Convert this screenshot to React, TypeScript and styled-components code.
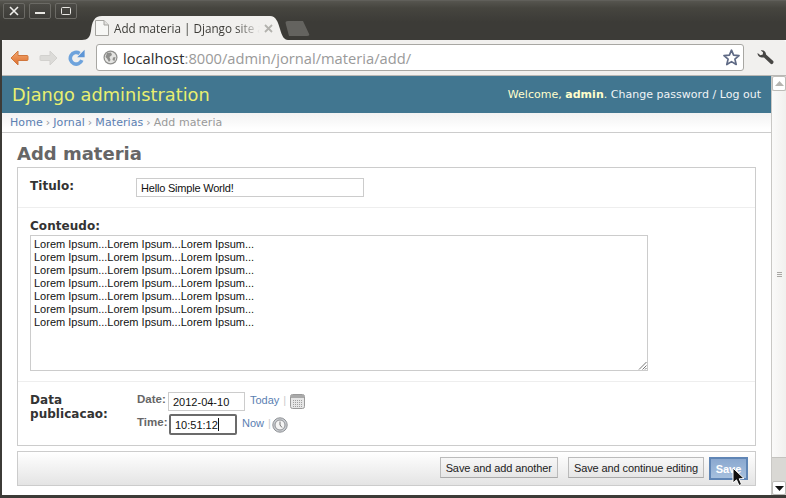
import React from 'react'
import styled, { createGlobalStyle } from 'styled-components'

const GlobalStyle = createGlobalStyle`
  html, body {
    margin: 0;
    padding: 0;
    overflow: hidden;
    background: #3c3b37;
  }
  * {
    box-sizing: border-box;
  }
`

const BrowserWindow = styled.div`
  width: 786px;
  height: 498px;
  display: flex;
  flex-direction: column;
  background: #3c3b37;
  padding-bottom: 3px;
  font-family: 'DejaVu Sans', sans-serif;
`

const TitleStrip = styled.div`
  height: 40px;
  flex: none;
  display: flex;
  padding-left: 3px;
  background: linear-gradient(#6a6965 0, #56554f 1px, #46453f 8px, #3c3b37 22px);
`

const WindowControls = styled.div`
  display: flex;
  gap: 4px;
  padding-top: 3px;
  width: 79px;
  flex: none;
`

const WindowButton = styled.div`
  width: 22px;
  height: 16px;
  border: 1px solid #6b6a65;
  border-radius: 2px;
  background: linear-gradient(#4b4a45, #3d3c38);
  display: flex;
  align-items: center;
  justify-content: center;
`

const Tab = styled.div`
  width: 206px;
  height: 24px;
  margin-top: 16px;
  flex: none;
  display: flex;
  align-items: center;
  padding: 0 0 0 13px;
  background: #f1f0ee;
  clip-path: path('M0 24 C6 24 8 21 9 15 C10 6 12 0 20 0 L188 0 C194 0 196 6 198 13 C200 20 202 24 206 24 Z');
`

const TabTitle = styled.span`
  width: 146px;
  margin-left: 5px;
  font-family: 'Open Sans', sans-serif;
  font-size: 11.7px;
  color: #3c3b37;
  white-space: nowrap;
  mask-image: linear-gradient(90deg, #000 122px, transparent 146px);
`

const TabClose = styled.svg`
  margin-left: 4px;
  flex: none;
`

const NewTab = styled.div`
  width: 25px;
  height: 15px;
  margin: 21px 0 0 -3px;
  flex: none;
  background: #64635f;
  clip-path: polygon(0 0, 72% 0, 100% 100%, 16% 100%);
  border-radius: 3px;
`

const Body = styled.div`
  flex: 1;
  min-height: 0;
  margin-left: 2px;
  display: flex;
  flex-direction: column;
  background: #fff;
`

const Toolbar = styled.div`
  height: 36px;
  flex: none;
  display: flex;
  align-items: center;
  padding: 0 12px 0 8px;
  background: #f1f0ee;
  border-bottom: 1px solid #b9b8b5;
  border-radius: 3px 3px 0 0;
`

const NavIcon = styled.svg`
  flex: none;
  margin-right: 10px;
`

const Omnibox = styled.div`
  flex: 1;
  height: 27px;
  margin: 0 13px 0 1px;
  display: flex;
  align-items: center;
  padding: 0 3px 0 6px;
  background: #fff;
  border: 1px solid #a8a7a3;
  border-radius: 3px;
`

const UrlText = styled.div`
  flex: 1;
  margin-left: 5px;
  font-family: 'Open Sans', sans-serif;
  font-size: 14.7px;
  color: #9a9a9a;
  white-space: nowrap;
`

const UrlHost = styled.span`
  color: #2e2e2e;
`

const Viewport = styled.div`
  flex: 1;
  min-height: 0;
  display: flex;
`

const Page = styled.div`
  flex: 1;
  min-width: 0;
  display: flex;
  flex-direction: column;
  background: #fff;
`

const Header = styled.div`
  height: 37px;
  flex: none;
  display: flex;
  align-items: center;
  justify-content: space-between;
  padding: 0 10px 0 10px;
  background: #417690;
`

const Branding = styled.div`
  font-size: 17.8px;
  color: #e9ef6f;
`

const UserTools = styled.div`
  font-size: 11px;
  letter-spacing: 0.02px;
  color: #ffc;
`

const UserLink = styled.span`
  color: #f0f4f6;
`

const Breadcrumbs = styled.div`
  height: 20px;
  flex: none;
  display: flex;
  align-items: center;
  padding-left: 8px;
  font-size: 11px;
  letter-spacing: 0.08px;
  color: #999;
  background: linear-gradient(#f2f2f2, #fff 16px);
  border-bottom: 1px solid #ccc;
`

const CrumbLink = styled.span`
  color: #5b80b2;
`

const CrumbSep = styled.span`
  margin: 0 3px;
`

const Content = styled.div`
  padding: 10px 15px 0;
`

const PageTitle = styled.h1`
  margin: 0 0 2px;
  font-size: 18px;
  line-height: 22px;
  font-weight: bold;
  color: #666;
`

const Module = styled.div`
  border: 1px solid #ccc;
  margin-bottom: 5px;
`

const FormRow = styled.div<{ $stacked?: boolean }>`
  display: flex;
  flex-direction: ${({ $stacked }) => ($stacked ? 'column' : 'row')};
  padding: ${({ $stacked }) => ($stacked ? '11px 12px 10px' : '10px 12px 10px')};
  border-bottom: 1px solid #eee;

  &:last-child {
    border-bottom: none;
  }
`

const FieldLabel = styled.div<{ $stacked?: boolean }>`
  width: ${({ $stacked }) => ($stacked ? 'auto' : '106px')};
  flex: none;
  margin-bottom: ${({ $stacked }) => ($stacked ? 1 : 0)}px;
  padding-top: ${({ $stacked }) => ($stacked ? 0 : 1)}px;
  font-size: 12px;
  line-height: ${({ $stacked }) => ($stacked ? 15 : 14)}px;
  font-weight: bold;
  letter-spacing: 0.05px;
  color: #333;
`

const TextBox = styled.div<{ $width: number; $focused?: boolean }>`
  width: ${({ $width }) => $width}px;
  height: ${({ $focused }) => ($focused ? 21 : 19)}px;
  display: flex;
  align-items: center;
  padding: 0 4px;
  font-family: 'Liberation Sans', sans-serif;
  font-size: 11px;
  color: #111;
  background: #fff;
  border: ${({ $focused }) => ($focused ? '2px solid #6b6b6b' : '1px solid #ccc')};
  border-radius: ${({ $focused }) => ($focused ? 2 : 0)}px;
`

const TitleBox = styled(TextBox)`
  letter-spacing: -0.2px;
`

const Caret = styled.span`
  width: 1px;
  height: 13px;
  background: #111;
`

const TextArea = styled.div`
  position: relative;
  width: 618px;
  height: 136px;
  padding: 2px 3px;
  border: 1px solid #ccc;
  font-family: 'Liberation Sans', sans-serif;
  font-size: 11px;
  line-height: 13px;
  color: #111;
`

const ResizeGrip = styled.svg`
  position: absolute;
  right: 0;
  bottom: 0;
`

const SplitRows = styled.div`
  display: flex;
  flex-direction: column;
  gap: 3px;
`

const SplitRow = styled.div`
  display: flex;
  align-items: center;
`

const SplitLabel = styled.div<{ $width: number }>`
  width: ${({ $width }) => $width}px;
  flex: none;
  margin-top: -4px;
  padding-left: 1px;
  font-family: 'Liberation Sans', sans-serif;
  font-size: 11.5px;
  font-weight: bold;
  line-height: 15px;
  color: #666;
`

const Shortcuts = styled.div`
  display: flex;
  align-items: center;
  height: 19px;
  margin-left: 5px;
  font-family: 'Liberation Sans', sans-serif;
  font-size: 11px;
  color: #5b80b2;
`

const ShortcutLink = styled.span`
  margin-top: -4px;
`

const ShortcutSep = styled.span`
  margin: -4px 4px 0;
  color: #ccc;
`

const ClockIcon = styled.svg`
  margin-left: -3px;
`

const SubmitRow = styled.div`
  height: 35px;
  display: flex;
  align-items: center;
  justify-content: flex-end;
  gap: 10px;
  padding: 0 7px 0 0;
  border: 1px solid #ccc;
  background: linear-gradient(#fff, #e4e4e4);
`

const ActionButton = styled.div`
  height: 21px;
  margin-bottom: 2px;
  display: flex;
  align-items: center;
  padding: 0 5px;
  font-family: 'Liberation Sans', sans-serif;
  font-size: 11px;
  letter-spacing: -0.1px;
  color: #222;
  background: linear-gradient(#f7f7f7, #e6e6e6);
  border: 1px solid #bbb;
  border-bottom-color: #aaa;
`

const DefaultButton = styled.div`
  position: relative;
  width: 39px;
  height: 23px;
  margin-left: -5px;
  display: flex;
  align-items: center;
  justify-content: center;
  font-family: 'Liberation Sans', sans-serif;
  font-size: 11px;
  font-weight: bold;
  color: #fff;
  background: linear-gradient(#8aa8cf, #a6c0de);
  border: 2px solid #5f85b5;
`

const Pointer = styled.svg`
  position: absolute;
  left: 21px;
  top: 8px;
`

const Scrollbar = styled.div`
  width: 15px;
  flex: none;
  display: flex;
  flex-direction: column;
  background: #d9d8d4;
  border-left: 1px solid #c9c8c5;
`

const ScrollButton = styled.div<{ $height: number }>`
  height: ${({ $height }) => $height}px;
  flex: none;
  display: flex;
  align-items: center;
  justify-content: center;
  background: #fff;
  border: 1px solid #bdbcb8;
  border-radius: 2px;
`

const ScrollThumb = styled.div`
  height: 367px;
  flex: none;
  display: flex;
  flex-direction: column;
  align-items: center;
  justify-content: center;
  gap: 1px;
  background: linear-gradient(90deg, #fafaf9, #f1f0ee);
  border-bottom: 1px solid #c4c3bf;
`

const ScrollTrack = styled.div`
  flex: 1;
`

const GripLine = styled.span`
  width: 5px;
  height: 1px;
  background: #a9a8a4;
`

const loremLines = Array.from({ length: 7 }, () => 'Lorem Ipsum...Lorem Ipsum...Lorem Ipsum...')

const App = () => {
  return (
    <BrowserWindow>
      <GlobalStyle />
      <TitleStrip>
        <WindowControls>
          <WindowButton>
            <svg width="10" height="10" viewBox="0 0 10 10">
              <path d="M1 1 L9 9 M9 1 L1 9" stroke="#f0efec" strokeWidth="1.6" />
            </svg>
          </WindowButton>
          <WindowButton>
            <svg width="10" height="10" viewBox="0 0 10 10">
              <rect x="0" y="6" width="10" height="2" fill="#e8e7e3" />
            </svg>
          </WindowButton>
          <WindowButton>
            <svg width="10" height="8" viewBox="0 0 10 8">
              <rect x="0.5" y="0.5" width="9" height="7" rx="1" fill="none" stroke="#e8e7e3" />
            </svg>
          </WindowButton>
        </WindowControls>
        <Tab>
          <svg width="14" height="16" viewBox="0 0 14 16">
            <path d="M0.5 0.5 H9 L13.5 5 V15.5 H0.5 Z" fill="#f7f7f5" stroke="#a5a4a0" />
            <path d="M9 0.5 V5 H13.5" fill="#e2e1de" stroke="#a5a4a0" />
          </svg>
          <TabTitle>Add materia | Django site a</TabTitle>
          <TabClose width="9" height="9" viewBox="0 0 9 9">
            <path d="M1 1 L8 8 M8 1 L1 8" stroke="#b3b2ae" strokeWidth="1.8" />
          </TabClose>
        </Tab>
        <NewTab />
      </TitleStrip>
      <Body>
        <Toolbar>
          <NavIcon width="19" height="16" viewBox="0 0 19 16">
            <defs>
              <linearGradient id="backFill" x1="0" y1="0" x2="0" y2="1">
                <stop offset="0" stopColor="#f3ab74" />
                <stop offset="1" stopColor="#dd6c2a" />
              </linearGradient>
            </defs>
            <path d="M8 1 L1 8 L8 15 V10.5 H17 Q18 10.5 18 9.5 V6.5 Q18 5.5 17 5.5 H8 Z" fill="url(#backFill)" stroke="#d0763c" strokeWidth="1" strokeLinejoin="round" />
          </NavIcon>
          <NavIcon width="19" height="16" viewBox="0 0 19 16">
            <path d="M11 1 L18 8 L11 15 V10.5 H2 Q1 10.5 1 9.5 V6.5 Q1 5.5 2 5.5 H11 Z" fill="#dcdbd8" stroke="#d2d1ce" strokeWidth="1" strokeLinejoin="round" />
          </NavIcon>
          <NavIcon width="17" height="17" viewBox="0 0 17 17">
            <path d="M13.8 11.2 A5.9 5.9 0 1 1 11.6 4.4" fill="none" stroke="#6ea3dc" strokeWidth="3.6" />
            <path d="M16.6 0.8 V8.2 H9.2 Z" fill="#5d95d6" />
          </NavIcon>
          <Omnibox>
            <svg width="15" height="15" viewBox="0 0 15 15">
              <circle cx="7.5" cy="7.5" r="7" fill="#8e8e8c" />
              <circle cx="7.5" cy="7.5" r="5.8" fill="#e4e4e2" />
              <path d="M4 3 L8 2.5 L9 5 L6.5 7 L7.5 10 L6 12 L4 8.5 L2.5 7 Z M10 7.5 L12.5 7 L11.5 11 L9.5 10 Z" fill="#8e8e8c" />
            </svg>
            <UrlText>
              <UrlHost>localhost</UrlHost>:8000/admin/jornal/materia/add/
            </UrlText>
            <svg width="17" height="17" viewBox="0 0 17 17">
              <path d="M8.5 1.2 L10.6 6.2 L16 6.6 L11.9 10.1 L13.2 15.5 L8.5 12.6 L3.8 15.5 L5.1 10.1 L1 6.6 L6.4 6.2 Z" fill="#fff" stroke="#5f6a85" strokeWidth="1.7" strokeLinejoin="round" />
            </svg>
          </Omnibox>
          <svg width="17" height="16" viewBox="0 0 17 16">
            <path d="M0.6 3 L3.4 5.2 L5.8 4.6 L6 2.2 L3.8 0.4 C6.5 -0.4 9.2 1.6 9 4.6 L16.2 11 C17.4 12.4 15.2 15.2 13.6 13.8 L7 7.4 C3.6 8 0.2 6 0.6 3 Z" fill="#474644" />
          </svg>
        </Toolbar>
        <Viewport>
          <Page>
            <Header>
              <Branding>Django administration</Branding>
              <UserTools>
                Welcome, <strong>admin</strong>. <UserLink>Change password / Log out</UserLink>
              </UserTools>
            </Header>
            <Breadcrumbs>
              <CrumbLink>Home</CrumbLink>
              <CrumbSep>›</CrumbSep>
              <CrumbLink>Jornal</CrumbLink>
              <CrumbSep>›</CrumbSep>
              <CrumbLink>Materias</CrumbLink>
              <CrumbSep>›</CrumbSep>
              Add materia
            </Breadcrumbs>
            <Content>
              <PageTitle>Add materia</PageTitle>
              <Module>
                <FormRow>
                  <FieldLabel>Titulo:</FieldLabel>
                  <TitleBox $width={228}>Hello Simple World!</TitleBox>
                </FormRow>
                <FormRow $stacked>
                  <FieldLabel $stacked>Conteudo:</FieldLabel>
                  <TextArea>
                    {loremLines.map((line, i) => (
                      <div key={i}>{line}</div>
                    ))}
                    <ResizeGrip width="9" height="9" viewBox="0 0 9 9">
                      <path d="M8.5 1 L1 8.5 M8.5 4.5 L4.5 8.5 M8.5 7 L7 8.5" stroke="#777" strokeWidth="1" />
                    </ResizeGrip>
                  </TextArea>
                </FormRow>
                <FormRow>
                  <FieldLabel>
                    Data
                    <br />
                    publicacao:
                  </FieldLabel>
                  <SplitRows>
                    <SplitRow>
                      <SplitLabel $width={32}>Date:</SplitLabel>
                      <TextBox $width={77}>2012-04-10</TextBox>
                      <Shortcuts>
                        <ShortcutLink>Today</ShortcutLink>
                        <ShortcutSep>|</ShortcutSep>
                        <svg width="15" height="15" viewBox="0 0 15 15">
                          <rect x="0.5" y="0.5" width="14" height="14" rx="2" fill="#e6e6e6" stroke="#9a9a9a" />
                          <rect x="1" y="1" width="13" height="3" fill="#a9a9a9" />
                          <path d="M3 6.5 H12 M3 8.5 H12 M3 10.5 H12 M3 12.5 H12" stroke="#a0a0a0" strokeDasharray="1 1" />
                        </svg>
                      </Shortcuts>
                    </SplitRow>
                    <SplitRow>
                      <SplitLabel $width={33}>Time:</SplitLabel>
                      <TextBox $width={68} $focused>
                        10:51:12
                        <Caret />
                      </TextBox>
                      <Shortcuts>
                        <ShortcutLink>Now</ShortcutLink>
                        <ShortcutSep>|</ShortcutSep>
                        <ClockIcon width="16" height="16" viewBox="0 0 16 16">
                          <circle cx="8" cy="8" r="7.2" fill="#c9ccd0" stroke="#8f9296" />
                          <circle cx="8" cy="8" r="5" fill="#f4f4f4" stroke="#8f9296" />
                          <path d="M8 4.5 V8 L10 10.5" fill="none" stroke="#777" />
                        </ClockIcon>
                      </Shortcuts>
                    </SplitRow>
                  </SplitRows>
                </FormRow>
              </Module>
              <SubmitRow>
                <ActionButton>Save and add another</ActionButton>
                <ActionButton>Save and continue editing</ActionButton>
                <DefaultButton>
                  Save
                  <Pointer width="13" height="20" viewBox="0 0 13 20">
                    <path d="M1 1 V16 L4.5 12.8 L7 18.5 L9.6 17.4 L7.2 11.8 L12 11.5 Z" fill="#111" stroke="#fff" strokeWidth="1" />
                  </Pointer>
                </DefaultButton>
              </SubmitRow>
            </Content>
          </Page>
          <Scrollbar>
            <ScrollButton $height={15}>
              <svg width="9" height="5" viewBox="0 0 9 5">
                <path d="M4.5 0 L9 5 H0 Z" fill="#b5b4b0" />
              </svg>
            </ScrollButton>
            <ScrollThumb>
              <GripLine />
              <GripLine />
              <GripLine />
            </ScrollThumb>
            <ScrollTrack />
            <ScrollButton $height={14}>
              <svg width="9" height="5" viewBox="0 0 9 5">
                <path d="M0 0 H9 L4.5 5 Z" fill="#111" />
              </svg>
            </ScrollButton>
          </Scrollbar>
        </Viewport>
      </Body>
    </BrowserWindow>
  )
}

export default App
